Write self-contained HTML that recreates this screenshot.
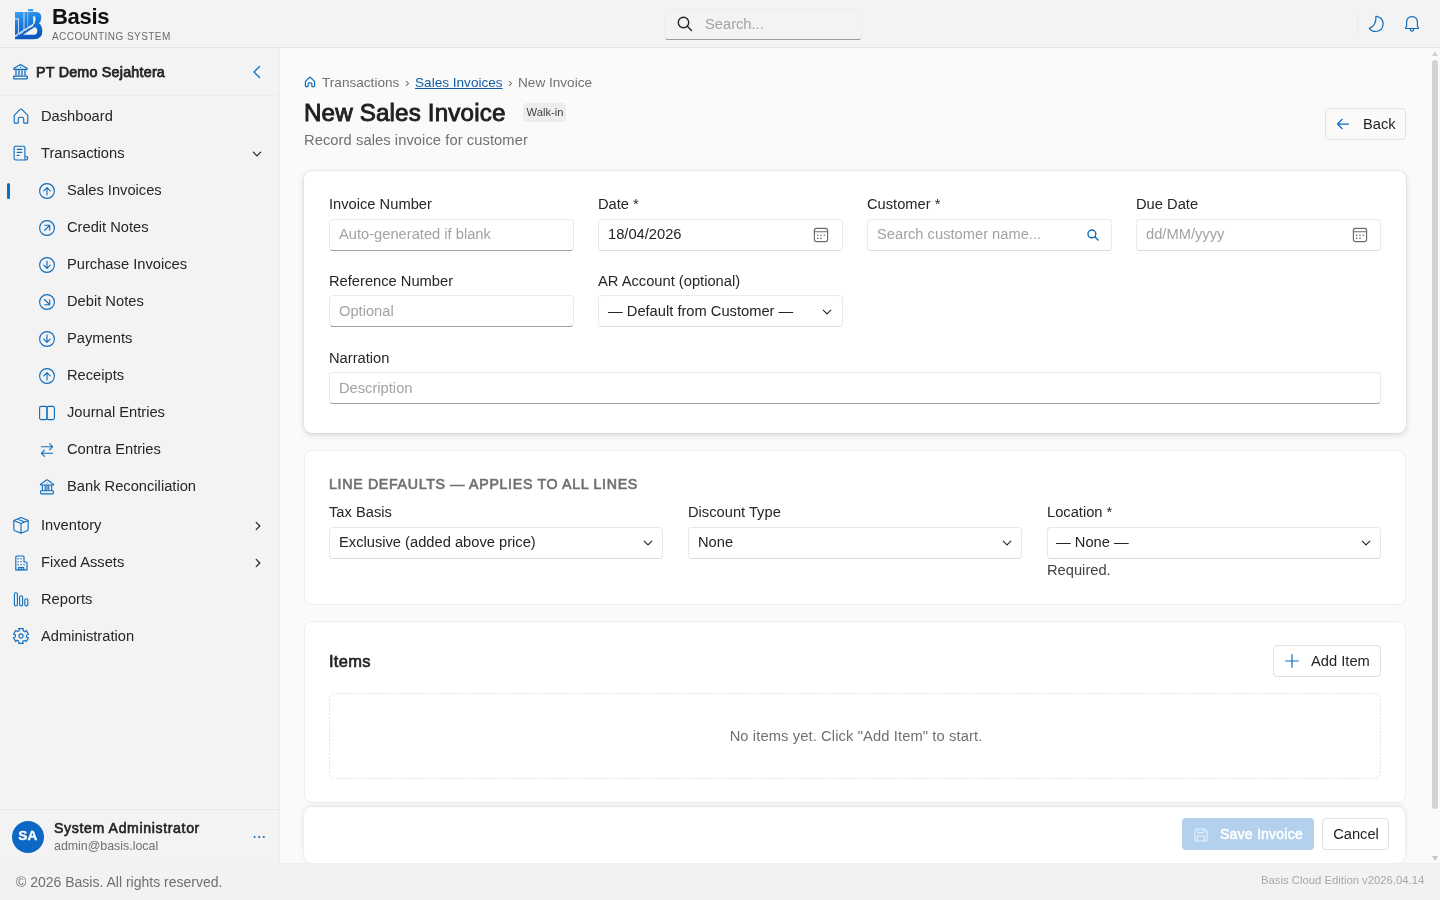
<!DOCTYPE html>
<html><head><meta charset="utf-8"><title>New Sales Invoice - Basis</title>
<style>
html,body{margin:0;padding:0;width:1440px;height:900px;overflow:hidden;}
body{position:relative;background:#fafafa;font-family:"Liberation Sans", sans-serif;}
.t{position:absolute;line-height:1;white-space:nowrap;will-change:transform;}
svg{display:block}
</style></head><body>

<div style="position:absolute;left:0px;top:0px;width:1440px;height:48px;box-sizing:border-box;background:#f3f3f3;border-bottom:1px solid #e3e3e3;"></div>
<div style="position:absolute;left:0px;top:48px;width:280px;height:815px;box-sizing:border-box;background:#f3f3f3;border-right:1px solid #ededed;"></div>
<div style="position:absolute;left:0px;top:863px;width:1440px;height:37px;box-sizing:border-box;background:#f2f2f2;border-top:1px solid #efefef;"></div>
<svg style="position:absolute;left:12px;top:6px;" width="32" height="36" viewBox="0 0 32 36" fill="none">
<defs><linearGradient id="lg" x1="0" y1="0" x2="0.25" y2="1"><stop offset="0" stop-color="#45aaf2"/><stop offset="0.5" stop-color="#1a7ee0"/><stop offset="1" stop-color="#0b57bf"/></linearGradient></defs>
<path fill="url(#lg)" fill-rule="evenodd" d="M3 6 H11.6 V26 L6.8 29 V12.5 H3 Z M3 13.5 H6 V29.6 L3 31.3 Z M12.4 6 H15.6 V23.2 L12.4 25.2 Z M16.1 6 H21.2 V20 L16.1 23 Z M16.1 3 H21.2 V5.3 H16.1 Z M21.2 6 H24.5 Q29.3 6.3 29.3 11.5 Q29.3 15 27 17.3 Q30.3 19.5 30.3 25.5 Q30.2 33.2 22 33.2 H3 V30.5 L21 18.5 Q23.6 16.6 23.6 12.8 Q23.4 10 21.2 10 Z M11 28.8 H21.8 Q25.3 28.6 25.3 25 Q25.2 21.2 22.5 21.2 Z"/>
<path d="M2.5 30 L23 17" stroke="#f3f3f3" stroke-width="0.9"/>
</svg>
<div class="t" style="top:6.38px;font-size:22px;color:#111;font-weight:700;letter-spacing:-0.3px;left:52px;">Basis</div>
<div class="t" style="top:31.54px;font-size:10px;color:#6b6b6b;font-weight:400;letter-spacing:0.45px;left:52px;">ACCOUNTING SYSTEM</div>
<div style="position:absolute;left:664px;top:8px;width:198px;height:32px;box-sizing:border-box;border:1px solid #eeeeee;border-bottom:1px solid #9a9a9a;border-radius:4px;"></div>
<svg style="position:absolute;left:677px;top:16px;" width="16" height="16" viewBox="0 0 16 16" fill="none"><circle cx="6.5" cy="6.5" r="5.2" stroke="#242424" stroke-width="1.4"/><path d="M10.3 10.3 L14.5 14.5" stroke="#242424" stroke-width="1.4" stroke-linecap="round"/></svg>
<div class="t" style="top:16.76px;font-size:14.7px;color:#a3a3a3;font-weight:400;left:705px;">Search...</div>
<div style="position:absolute;left:1357px;top:12px;width:1px;height:23px;box-sizing:border-box;background:#ebebeb;"></div>
<svg style="position:absolute;left:1364px;top:12px;" width="24" height="24" viewBox="1364 12 24 24" fill="none"><path d="M1375.9 16.5 C1376.3 22.5 1374.2 26.5 1369.3 28.4 Q1371.3 31.5 1375.8 31.5 Q1383 31.2 1383.1 23.6 Q1382.8 17.4 1376.6 16.4 Z" stroke="#0f6cbd" stroke-width="1.15" stroke-linejoin="round"/></svg>
<svg style="position:absolute;left:1404px;top:15px;" width="17" height="18" viewBox="0 0 17 18" fill="none"><path d="M2.6 11.6 V7.6 Q2.6 1.6 8 1.6 Q13.4 1.6 13.4 7.6 V11.6 L14.5 12.7 Q14.8 13.5 14 13.5 H2 Q1.2 13.5 1.5 12.7 Z" stroke="#0f6cbd" stroke-width="1.15" stroke-linejoin="round"/><path d="M6.3 13.8 Q6.3 16.2 8 16.2 Q9.7 16.2 9.7 13.8" stroke="#0f6cbd" stroke-width="1.15"/></svg>
<svg style="position:absolute;left:12px;top:63px;" width="17" height="17" viewBox="0 0 17 17" fill="none"><path d="M2 5.3 L8.5 1.5 L15 5.3 V6.5 H2 Z" stroke="#0f6cbd" stroke-width="1.3" stroke-linejoin="round"/><circle cx="8.5" cy="4.2" r="0.7" fill="#0f6cbd"/><path d="M4 7.5 V12.5 M7 7.5 V12.5 M10 7.5 V12.5 M13 7.5 V12.5" stroke="#0f6cbd" stroke-width="1.3"/><rect x="1.7" y="13.2" width="13.6" height="2.6" rx="0.6" stroke="#0f6cbd" stroke-width="1.3"/></svg>
<div class="t" style="top:65.20px;font-size:14.3px;color:#242424;font-weight:400;letter-spacing:0.22px;left:36px;-webkit-text-stroke:0.75px #242424;">PT Demo Sejahtera</div>
<svg style="position:absolute;left:251px;top:65px;" width="12" height="14" viewBox="0 0 12 14" fill="none"><path d="M8.5 1.5 L3 7 L8.5 12.5" stroke="#0f6cbd" stroke-width="1.3" stroke-linecap="round" stroke-linejoin="round"/></svg>
<div style="position:absolute;left:0px;top:95px;width:280px;height:1px;box-sizing:border-box;background:#ededed;"></div>
<svg style="position:absolute;left:8.7px;top:104.0px" width="24" height="24" viewBox="-12.0 -12.0 24 24" fill="none" stroke="#0f6cbd" stroke-width="1.12" stroke-linecap="round" stroke-linejoin="round"><path d="M-6.3 -1.2 L-0.9 -6.6 Q0 -7.4 0.9 -6.6 L6.3 -1.2 Q6.8 -0.7 6.8 0 V6.4 Q6.8 7.1 6.1 7.1 H3.4 Q2.7 7.1 2.7 6.4 V2.6 Q2.7 1.2 1.3 1.2 H-1.3 Q-2.7 1.2 -2.7 2.6 V6.4 Q-2.7 7.1 -3.4 7.1 H-6.1 Q-6.8 7.1 -6.8 6.4 V0 Q-6.8 -0.7 -6.3 -1.2 Z"/></svg>
<div class="t" style="top:108.56px;font-size:14.7px;color:#262626;font-weight:400;left:41px;">Dashboard</div>
<svg style="position:absolute;left:8.7px;top:141.0px" width="24" height="24" viewBox="-12.0 -12.0 24 24" fill="none" stroke="#0f6cbd" stroke-width="1.12" stroke-linecap="round" stroke-linejoin="round"><path d="M-5.1 7 Q-6.9 7 -6.9 5.2 V-5.2 Q-6.9 -6.8 -5.3 -6.8 H2.3 Q3.9 -6.8 3.9 -5.2 V3.8 H6.6 V5.2 Q6.6 7 4.8 7 Z M3.9 3.8 V5.2 Q3.9 7 5.3 7"/><path d="M-3.8 -3.6 H0.8 M-3.8 -0.6 H0.8 M-3.8 2.4 H-2"/></svg>
<div class="t" style="top:145.56px;font-size:14.7px;color:#262626;font-weight:400;left:41px;">Transactions</div>
<svg style="position:absolute;left:249px;top:146px" width="16" height="16" viewBox="-8 -8 16 16" fill="none" stroke="#242424" stroke-width="1.2" stroke-linecap="round" stroke-linejoin="round"><path d="M-3.6 -1.8 L0 1.8 L3.6 -1.8"/></svg>
<svg style="position:absolute;left:34.7px;top:178.5px" width="24" height="24" viewBox="-12.0 -12.0 24 24" fill="none" stroke="#0f6cbd" stroke-width="1.12" stroke-linecap="round" stroke-linejoin="round"><circle cx="0" cy="0" r="7.4"/><path d="M0 3.9 V-3.3 M-3.2 -0.1 L0 -3.3 L3.2 -0.1"/></svg>
<div class="t" style="top:182.56px;font-size:14.7px;color:#262626;font-weight:400;left:67px;">Sales Invoices</div>
<svg style="position:absolute;left:34.7px;top:215.5px" width="24" height="24" viewBox="-12.0 -12.0 24 24" fill="none" stroke="#0f6cbd" stroke-width="1.12" stroke-linecap="round" stroke-linejoin="round"><circle cx="0" cy="0" r="7.4"/><path d="M-2.5 2.5 L2.5 -2.5 M-2.3 -2.7 H2.7 V2.3"/></svg>
<div class="t" style="top:219.56px;font-size:14.7px;color:#262626;font-weight:400;left:67px;">Credit Notes</div>
<svg style="position:absolute;left:34.7px;top:252.5px" width="24" height="24" viewBox="-12.0 -12.0 24 24" fill="none" stroke="#0f6cbd" stroke-width="1.12" stroke-linecap="round" stroke-linejoin="round"><circle cx="0" cy="0" r="7.4"/><path d="M0 -3.9 V3.3 M-3.2 0.1 L0 3.3 L3.2 0.1"/></svg>
<div class="t" style="top:256.56px;font-size:14.7px;color:#262626;font-weight:400;left:67px;">Purchase Invoices</div>
<svg style="position:absolute;left:34.7px;top:289.5px" width="24" height="24" viewBox="-12.0 -12.0 24 24" fill="none" stroke="#0f6cbd" stroke-width="1.12" stroke-linecap="round" stroke-linejoin="round"><circle cx="0" cy="0" r="7.4"/><path d="M-2.5 -2.5 L2.5 2.5 M2.7 -2.3 V2.7 H-2.3"/></svg>
<div class="t" style="top:293.56px;font-size:14.7px;color:#262626;font-weight:400;left:67px;">Debit Notes</div>
<svg style="position:absolute;left:34.7px;top:326.5px" width="24" height="24" viewBox="-12.0 -12.0 24 24" fill="none" stroke="#0f6cbd" stroke-width="1.12" stroke-linecap="round" stroke-linejoin="round"><circle cx="0" cy="0" r="7.4"/><path d="M0 -3.9 V3.3 M-3.2 0.1 L0 3.3 L3.2 0.1"/></svg>
<div class="t" style="top:330.56px;font-size:14.7px;color:#262626;font-weight:400;left:67px;">Payments</div>
<svg style="position:absolute;left:34.7px;top:363.5px" width="24" height="24" viewBox="-12.0 -12.0 24 24" fill="none" stroke="#0f6cbd" stroke-width="1.12" stroke-linecap="round" stroke-linejoin="round"><circle cx="0" cy="0" r="7.4"/><path d="M0 3.9 V-3.3 M-3.2 -0.1 L0 -3.3 L3.2 -0.1"/></svg>
<div class="t" style="top:367.56px;font-size:14.7px;color:#262626;font-weight:400;left:67px;">Receipts</div>
<svg style="position:absolute;left:34.7px;top:400.5px" width="24" height="24" viewBox="-12.0 -12.0 24 24" fill="none" stroke="#0f6cbd" stroke-width="1.12" stroke-linecap="round" stroke-linejoin="round"><rect x="-7.4" y="-6.6" width="7.4" height="13.2" rx="1.6"/><rect x="0" y="-6.6" width="7.4" height="13.2" rx="1.6"/></svg>
<div class="t" style="top:404.56px;font-size:14.7px;color:#262626;font-weight:400;left:67px;">Journal Entries</div>
<svg style="position:absolute;left:34.7px;top:437.5px" width="24" height="24" viewBox="-12.0 -12.0 24 24" fill="none" stroke="#0f6cbd" stroke-width="1.12" stroke-linecap="round" stroke-linejoin="round"><path d="M-5.6 -3.3 H5.6 M2.5 -6.4 L5.6 -3.3 L2.5 -0.2 M5.6 3.3 H-5.6 M-2.5 0.2 L-5.6 3.3 L-2.5 6.4"/></svg>
<div class="t" style="top:441.56px;font-size:14.7px;color:#262626;font-weight:400;left:67px;">Contra Entries</div>
<svg style="position:absolute;left:34.7px;top:474.5px" width="24" height="24" viewBox="-12.0 -12.0 24 24" fill="none" stroke="#0f6cbd" stroke-width="1.12" stroke-linecap="round" stroke-linejoin="round"><path d="M-6.4 -2.6 L-0.6 -7 Q0 -7.4 0.6 -7 L6.4 -2.6 Q6.8 -2.2 6.4 -2 H-6.4 Q-6.8 -2.2 -6.4 -2.6 Z"/><path d="M-4.6 -1.6 V3.4 M-1.8 -1.6 V3.4 M0 -1.6 V3.4 M1.8 -1.6 V3.4 M4.6 -1.6 V3.4"/><rect x="-6.4" y="3.8" width="12.8" height="3.1" rx="0.8"/><circle cx="0" cy="-4.3" r="0.55" fill="#0f6cbd" stroke="none"/></svg>
<div class="t" style="top:478.56px;font-size:14.7px;color:#262626;font-weight:400;left:67px;">Bank Reconciliation</div>
<div style="position:absolute;left:7px;top:183px;width:3px;height:16px;box-sizing:border-box;background:#0f6cbd;border-radius:2px;"></div>
<svg style="position:absolute;left:8.7px;top:513.0px" width="24" height="24" viewBox="-12.0 -12.0 24 24" fill="none" stroke="#0f6cbd" stroke-width="1.12" stroke-linecap="round" stroke-linejoin="round"><path d="M0 -7.4 L7.2 -4.4 V4.6 Q7.2 5.2 6.6 5.5 L0 8.2 L-6.6 5.5 Q-7.2 5.2 -7.2 4.6 V-4.4 Z M-7.2 -4.4 L0 -1.5 L7.2 -4.4 M0 -1.5 V8.2 M-3.6 -5.9 L3.6 -3"/></svg>
<div class="t" style="top:517.56px;font-size:14.7px;color:#262626;font-weight:400;left:41px;">Inventory</div>
<svg style="position:absolute;left:250px;top:517.5px" width="16" height="16" viewBox="-8 -8 16 16" fill="none" stroke="#242424" stroke-width="1.2" stroke-linecap="round" stroke-linejoin="round"><path d="M-1.8 -3.6 L1.8 0 L-1.8 3.6"/></svg>
<svg style="position:absolute;left:8.7px;top:550.8px" width="24" height="24" viewBox="-12.0 -12.0 24 24" fill="none" stroke="#0f6cbd" stroke-width="1.12" stroke-linecap="round" stroke-linejoin="round"><path d="M-5.2 6.9 V-6 Q-5.2 -7 -4.2 -7 H2 Q3 -7 3 -6 V-1 H5 Q6 -1 6 0 V6.9 Z"/><path d="M-2.5 6.9 V4.6 H2.7 V6.9 M0.1 4.6 V6.9" stroke-width="1.1"/><g fill="#0f6cbd" stroke="none"><circle cx="-2.9" cy="-4.2" r="0.75"/><circle cx="0" cy="-4.2" r="0.75"/><circle cx="-2.9" cy="-1.2" r="0.75"/><circle cx="0" cy="-1.2" r="0.75"/><circle cx="-2.9" cy="1.8" r="0.75"/><circle cx="0" cy="1.8" r="0.75"/><circle cx="3" cy="1.8" r="0.75"/></g></svg>
<div class="t" style="top:554.56px;font-size:14.7px;color:#262626;font-weight:400;left:41px;">Fixed Assets</div>
<svg style="position:absolute;left:250px;top:555.3px" width="16" height="16" viewBox="-8 -8 16 16" fill="none" stroke="#242424" stroke-width="1.2" stroke-linecap="round" stroke-linejoin="round"><path d="M-1.8 -3.6 L1.8 0 L-1.8 3.6"/></svg>
<svg style="position:absolute;left:8.7px;top:587.0px" width="24" height="24" viewBox="-12.0 -12.0 24 24" fill="none" stroke="#0f6cbd" stroke-width="1.12" stroke-linecap="round" stroke-linejoin="round"><rect x="-6.6" y="-6.3" width="3" height="13.2" rx="1.5"/><rect x="-1.4" y="-3.2" width="3" height="10.1" rx="1.5"/><rect x="3.8" y="-0.2" width="3" height="7.1" rx="1.5"/></svg>
<div class="t" style="top:591.56px;font-size:14.7px;color:#262626;font-weight:400;left:41px;">Reports</div>
<svg style="position:absolute;left:8.7px;top:624.3px" width="24" height="24" viewBox="-12.0 -12.0 24 24" fill="none" stroke="#0f6cbd" stroke-width="1.12" stroke-linecap="round" stroke-linejoin="round"><path d="M-2.25 -7.36 L2.25 -7.36 L2.14 -5.28 L3.39 -4.33 L3.89 -4.17 L5.25 -5.63 L7.50 -1.73 L5.64 -0.79 L5.45 0.77 L5.55 1.28 L7.50 1.73 L5.25 5.63 L3.51 4.49 L2.06 5.10 L1.67 5.45 L2.25 7.36 L-2.25 7.36 L-2.14 5.28 L-3.39 4.33 L-3.89 4.17 L-5.25 5.63 L-7.50 1.73 L-5.64 0.79 L-5.45 -0.77 L-5.55 -1.28 L-7.50 -1.73 L-5.25 -5.63 L-3.51 -4.49 L-2.06 -5.10 L-1.67 -5.45 Z"/><circle cx="0" cy="0" r="2.1"/></svg>
<div class="t" style="top:628.56px;font-size:14.7px;color:#262626;font-weight:400;left:41px;">Administration</div>
<div style="position:absolute;left:0px;top:809px;width:280px;height:1px;box-sizing:border-box;background:#e9e9e9;"></div>
<div style="position:absolute;left:12px;top:820.6px;width:32px;height:32px;box-sizing:border-box;background:#0c68c4;border-radius:50%;"></div>
<div class="t" style="top:829.49px;font-size:13.6px;color:#fff;font-weight:700;letter-spacing:0.2px;left:-272px;width:600px;text-align:center;-webkit-text-stroke:0.35px #fff;">SA</div>
<div class="t" style="top:821.06px;font-size:14.1px;color:#242424;font-weight:400;letter-spacing:0.64px;left:54px;-webkit-text-stroke:0.6px #242424;">System Administrator</div>
<div class="t" style="top:839.50px;font-size:12.4px;color:#707070;font-weight:400;left:54px;">admin@basis.local</div>
<svg style="position:absolute;left:250px;top:832px;" width="18" height="10" viewBox="0 0 18 10" fill="none"><circle cx="4.6" cy="5" r="1.05" fill="#0f6cbd"/><circle cx="9.2" cy="5" r="1.05" fill="#0f6cbd"/><circle cx="13.8" cy="5" r="1.05" fill="#0f6cbd"/></svg>
<div class="t" style="top:875.15px;font-size:14px;color:#707070;font-weight:400;left:16px;">© 2026 Basis. All rights reserved.</div>
<div class="t" style="top:875.43px;font-size:11.3px;color:#a8a8a8;font-weight:400;right:16px;text-align:right;">Basis Cloud Edition v2026.04.14</div>
<svg style="position:absolute;left:298.0px;top:70.0px" width="24" height="24" viewBox="-12.0 -12.0 24 24" fill="none" stroke="#0f6cbd" stroke-width="1.2" stroke-linecap="round" stroke-linejoin="round"><path d="M-4.2 -0.9 L-0.6 -4.5 Q0 -5 0.6 -4.5 L4.2 -0.9 Q4.6 -0.5 4.6 0 V4.1 Q4.6 4.6 4.1 4.6 H2.3 Q1.8 4.6 1.8 4.1 V1.8 Q1.8 0.9 0.9 0.9 H-0.9 Q-1.8 0.9 -1.8 1.8 V4.1 Q-1.8 4.6 -2.3 4.6 H-4.1 Q-4.6 4.6 -4.6 4.1 V0 Q-4.6 -0.5 -4.2 -0.9 Z"/></svg>
<div class="t" style="top:75.79px;font-size:13.6px;color:#707070;font-weight:400;left:322px;">Transactions</div>
<div class="t" style="top:75.79px;font-size:13.6px;color:#707070;font-weight:400;left:404.5px;">›</div>
<div class="t" style="top:75.79px;font-size:13.6px;color:#115ea3;font-weight:400;left:415px;text-decoration:underline;text-decoration-thickness:1px;text-underline-offset:1px;">Sales Invoices</div>
<div class="t" style="top:75.79px;font-size:13.6px;color:#707070;font-weight:400;left:507.5px;">›</div>
<div class="t" style="top:75.79px;font-size:13.6px;color:#707070;font-weight:400;left:518px;">New Invoice</div>
<div class="t" style="top:100.71px;font-size:24.2px;color:#1f1f1f;font-weight:400;letter-spacing:0.15px;left:304px;-webkit-text-stroke:0.9px #1f1f1f;">New Sales Invoice</div>
<div style="position:absolute;left:523px;top:103px;width:43px;height:19px;box-sizing:border-box;background:#ededed;border-radius:4px;"></div>
<div class="t" style="top:106.92px;font-size:11.2px;color:#424242;font-weight:400;left:244.5px;width:600px;text-align:center;">Walk-in</div>
<div class="t" style="top:132.76px;font-size:14.7px;color:#707070;font-weight:400;letter-spacing:0.08px;left:304px;">Record sales invoice for customer</div>
<div style="position:absolute;left:1325px;top:108px;width:81px;height:32px;box-sizing:border-box;border:1px solid #e0e0e0;border-radius:4px;background:#fafafa;"></div>
<svg style="position:absolute;left:1331.3px;top:112.0px" width="24" height="24" viewBox="-12.0 -12.0 24 24" fill="none" stroke="#0f6cbd" stroke-width="1.25" stroke-linecap="round" stroke-linejoin="round"><path d="M5.5 0 H-5.5 M-0.8 -4.7 L-5.5 0 L-0.8 4.7"/></svg>
<div class="t" style="top:116.76px;font-size:14.7px;color:#242424;font-weight:400;left:1363px;">Back</div>
<div style="position:absolute;left:304px;top:171px;width:1102px;height:262px;box-sizing:border-box;background:#fff;border-radius:8px;box-shadow:0 0 2px rgba(0,0,0,0.12),0 2px 6px rgba(0,0,0,0.14);"></div>
<div class="t" style="top:196.56px;font-size:14.7px;color:#262626;font-weight:400;left:329px;">Invoice Number</div>
<div style="position:absolute;left:329px;top:219px;width:245px;height:32px;box-sizing:border-box;background:#fff;border:1px solid #ebebeb;border-bottom-color:#a0a0a0;border-radius:4px;"></div>
<div class="t" style="top:226.56px;font-size:14.7px;color:#a3a3a3;font-weight:400;left:339px;">Auto-generated if blank</div>
<div class="t" style="top:196.56px;font-size:14.7px;color:#262626;font-weight:400;left:598px;">Date *</div>
<div style="position:absolute;left:598px;top:219px;width:245px;height:32px;box-sizing:border-box;background:#fff;border:1px solid #ebebeb;border-bottom-color:#dcdcdc;border-radius:4px;"></div>
<div class="t" style="top:226.56px;font-size:14.7px;color:#242424;font-weight:400;left:607.5px;">18/04/2026</div>
<svg style="position:absolute;left:809.2px;top:222.6px" width="24" height="24" viewBox="-12.0 -12.0 24 24" fill="none" stroke="#6b6b6b" stroke-width="1.15" stroke-linecap="round" stroke-linejoin="round"><rect x="-6.6" y="-6.6" width="13.2" height="13.2" rx="2.2"/><path d="M-6.6 -3.3 H6.6"/><g fill="#6b6b6b" stroke="none"><circle cx="-3.3" cy="0.3" r="0.8"/><circle cx="0" cy="0.3" r="0.8"/><circle cx="3.3" cy="0.3" r="0.8"/><circle cx="-3.3" cy="3.4" r="0.8"/><circle cx="0" cy="3.4" r="0.8"/></g></svg>
<div class="t" style="top:196.56px;font-size:14.7px;color:#262626;font-weight:400;left:867px;">Customer *</div>
<div style="position:absolute;left:867px;top:219px;width:245px;height:32px;box-sizing:border-box;background:#fff;border:1px solid #ebebeb;border-bottom-color:#dcdcdc;border-radius:4px;"></div>
<div class="t" style="top:226.56px;font-size:14.7px;color:#a3a3a3;font-weight:400;left:877px;">Search customer name...</div>
<svg style="position:absolute;left:1080.5px;top:223.0px" width="24" height="24" viewBox="-12.0 -12.0 24 24" fill="none" stroke="#0f6cbd" stroke-width="1.45" stroke-linecap="round" stroke-linejoin="round"><circle cx="-1.1" cy="-1.1" r="3.9"/><path d="M1.8 1.8 L5 5"/></svg>
<div class="t" style="top:196.56px;font-size:14.7px;color:#262626;font-weight:400;left:1136px;">Due Date</div>
<div style="position:absolute;left:1136px;top:219px;width:245px;height:32px;box-sizing:border-box;background:#fff;border:1px solid #ebebeb;border-bottom-color:#dcdcdc;border-radius:4px;"></div>
<div class="t" style="top:226.56px;font-size:14.7px;color:#a3a3a3;font-weight:400;left:1146px;">dd/MM/yyyy</div>
<svg style="position:absolute;left:1348.2px;top:222.6px" width="24" height="24" viewBox="-12.0 -12.0 24 24" fill="none" stroke="#6b6b6b" stroke-width="1.15" stroke-linecap="round" stroke-linejoin="round"><rect x="-6.6" y="-6.6" width="13.2" height="13.2" rx="2.2"/><path d="M-6.6 -3.3 H6.6"/><g fill="#6b6b6b" stroke="none"><circle cx="-3.3" cy="0.3" r="0.8"/><circle cx="0" cy="0.3" r="0.8"/><circle cx="3.3" cy="0.3" r="0.8"/><circle cx="-3.3" cy="3.4" r="0.8"/><circle cx="0" cy="3.4" r="0.8"/></g></svg>
<div class="t" style="top:273.56px;font-size:14.7px;color:#262626;font-weight:400;left:329px;">Reference Number</div>
<div style="position:absolute;left:329px;top:295px;width:245px;height:32px;box-sizing:border-box;background:#fff;border:1px solid #ebebeb;border-bottom-color:#a0a0a0;border-radius:4px;"></div>
<div class="t" style="top:303.56px;font-size:14.7px;color:#a3a3a3;font-weight:400;left:339px;">Optional</div>
<div class="t" style="top:273.56px;font-size:14.7px;color:#262626;font-weight:400;left:598px;">AR Account (optional)</div>
<div style="position:absolute;left:598px;top:295px;width:245px;height:32px;box-sizing:border-box;background:#fff;border:1px solid #ebebeb;border-bottom-color:#dcdcdc;border-radius:4px;"></div>
<div class="t" style="top:303.56px;font-size:14.7px;color:#242424;font-weight:400;left:607.5px;">— Default from Customer —</div>
<svg style="position:absolute;left:819px;top:303.5px" width="16" height="16" viewBox="-8 -8 16 16" fill="none" stroke="#242424" stroke-width="1.1" stroke-linecap="round" stroke-linejoin="round"><path d="M-3.8 -1.9 L0 1.9 L3.8 -1.9"/></svg>
<div class="t" style="top:350.56px;font-size:14.7px;color:#262626;font-weight:400;left:329px;">Narration</div>
<div style="position:absolute;left:329px;top:372px;width:1052px;height:32px;box-sizing:border-box;background:#fff;border:1px solid #ebebeb;border-bottom-color:#a0a0a0;border-radius:4px;"></div>
<div class="t" style="top:380.56px;font-size:14.7px;color:#a3a3a3;font-weight:400;left:339px;">Description</div>
<div style="position:absolute;left:304px;top:450px;width:1102px;height:155px;box-sizing:border-box;background:#fff;border:1px solid #eeeeee;border-radius:8px;"></div>
<div class="t" style="top:476.78px;font-size:14.2px;color:#707070;font-weight:400;letter-spacing:0.69px;left:329px;-webkit-text-stroke:0.65px #707070;">LINE DEFAULTS — APPLIES TO ALL LINES</div>
<div class="t" style="top:504.56px;font-size:14.7px;color:#262626;font-weight:400;left:329px;">Tax Basis</div>
<div style="position:absolute;left:329px;top:527px;width:334px;height:32px;box-sizing:border-box;background:#fff;border:1px solid #e8e8e8;border-bottom-color:#dadada;border-radius:4px;"></div>
<div class="t" style="top:534.56px;font-size:14.7px;color:#242424;font-weight:400;left:339px;">Exclusive (added above price)</div>
<svg style="position:absolute;left:639.5px;top:534.5px" width="16" height="16" viewBox="-8 -8 16 16" fill="none" stroke="#242424" stroke-width="1.1" stroke-linecap="round" stroke-linejoin="round"><path d="M-3.8 -1.9 L0 1.9 L3.8 -1.9"/></svg>
<div class="t" style="top:504.56px;font-size:14.7px;color:#262626;font-weight:400;left:688px;">Discount Type</div>
<div style="position:absolute;left:688px;top:527px;width:334px;height:32px;box-sizing:border-box;background:#fff;border:1px solid #e8e8e8;border-bottom-color:#dadada;border-radius:4px;"></div>
<div class="t" style="top:534.56px;font-size:14.7px;color:#242424;font-weight:400;left:698px;">None</div>
<svg style="position:absolute;left:998.5px;top:534.5px" width="16" height="16" viewBox="-8 -8 16 16" fill="none" stroke="#242424" stroke-width="1.1" stroke-linecap="round" stroke-linejoin="round"><path d="M-3.8 -1.9 L0 1.9 L3.8 -1.9"/></svg>
<div class="t" style="top:504.56px;font-size:14.7px;color:#262626;font-weight:400;left:1047px;">Location *</div>
<div style="position:absolute;left:1047px;top:527px;width:334px;height:32px;box-sizing:border-box;background:#fff;border:1px solid #e8e8e8;border-bottom-color:#dadada;border-radius:4px;"></div>
<div class="t" style="top:534.56px;font-size:14.7px;color:#242424;font-weight:400;left:1056px;">— None —</div>
<svg style="position:absolute;left:1357.5px;top:534.5px" width="16" height="16" viewBox="-8 -8 16 16" fill="none" stroke="#242424" stroke-width="1.1" stroke-linecap="round" stroke-linejoin="round"><path d="M-3.8 -1.9 L0 1.9 L3.8 -1.9"/></svg>
<div class="t" style="top:562.56px;font-size:14.7px;color:#424242;font-weight:400;left:1047px;">Required.</div>
<div style="position:absolute;left:304px;top:621px;width:1102px;height:182px;box-sizing:border-box;background:#fff;border:1px solid #eeeeee;border-radius:8px;"></div>
<div class="t" style="top:652.73px;font-size:16.5px;color:#242424;font-weight:400;letter-spacing:0.28px;left:329px;-webkit-text-stroke:0.65px #242424;">Items</div>
<div style="position:absolute;left:1273px;top:645px;width:108px;height:32px;box-sizing:border-box;background:#fff;border:1px solid #e0e0e0;border-radius:4px;"></div>
<svg style="position:absolute;left:1279.5px;top:649.0px" width="24" height="24" viewBox="-12.0 -12.0 24 24" fill="none" stroke="#0f6cbd" stroke-width="1.2" stroke-linecap="round" stroke-linejoin="round"><path d="M0 -6.3 V6.3 M-6.3 0 H6.3"/></svg>
<div class="t" style="top:653.56px;font-size:14.7px;color:#242424;font-weight:400;left:1311px;">Add Item</div>
<svg style="position:absolute;left:329px;top:693px;" width="1052" height="86" viewBox="0 0 1052 86" fill="none"><rect x="0.5" y="0.5" width="1051" height="85" rx="6" stroke="#e2e2e2" stroke-width="1" stroke-dasharray="2 1.6"/></svg>
<div class="t" style="top:728.56px;font-size:14.7px;color:#707070;font-weight:400;letter-spacing:0.12px;left:555.5px;width:600px;text-align:center;">No items yet. Click "Add Item" to start.</div>
<div style="position:absolute;left:280px;top:780px;width:1160px;height:83px;overflow:hidden;"><div style="position:absolute;left:24px;top:27px;width:1101px;height:56px;background:#fff;border-radius:8px;box-shadow:0 0 3px rgba(0,0,0,0.08),0 -2px 6px rgba(0,0,0,0.07);"></div></div>
<div style="position:absolute;left:1182px;top:818px;width:132px;height:32px;box-sizing:border-box;background:#b3d0ec;border-radius:4px;"></div>
<svg style="position:absolute;left:1188.8px;top:822.8px" width="24" height="24" viewBox="-12.0 -12.0 24 24" fill="none" stroke="#eaf2fb" stroke-width="1.05" stroke-linecap="round" stroke-linejoin="round"><path d="M-5.2 -6 H3.3 L6 -3.3 V4.8 Q6 6 4.8 6 H-4.8 Q-6 6 -6 4.8 V-4.8 Q-6 -6 -5.2 -6 Z M-3 -6 V-3 Q-3 -2.3 -2.3 -2.3 H1.8 Q2.5 -2.3 2.5 -3 V-6 M-3.6 6 V1.6 Q-3.6 0.9 -2.9 0.9 H2.9 Q3.6 0.9 3.6 1.6 V6"/></svg>
<div class="t" style="top:827.35px;font-size:14px;color:#fff;font-weight:400;letter-spacing:0.23px;left:1220px;-webkit-text-stroke:0.55px #fff;">Save Invoice</div>
<div style="position:absolute;left:1322px;top:818px;width:67px;height:32px;box-sizing:border-box;background:#fff;border:1px solid #e0e0e0;border-radius:4px;"></div>
<div class="t" style="top:826.76px;font-size:14.7px;color:#242424;font-weight:400;left:1055.5px;width:600px;text-align:center;">Cancel</div>
<div style="position:absolute;left:1432px;top:60px;width:6px;height:749px;box-sizing:border-box;background:#d3d3d3;border-radius:3px;"></div>
<div style="position:absolute;left:1432px;top:51px;width:0;height:0;border-left:3px solid transparent;border-right:3px solid transparent;border-bottom:5px solid #d3d3d3;"></div>
<div style="position:absolute;left:1432px;top:856px;width:0;height:0;border-left:3px solid transparent;border-right:3px solid transparent;border-top:5px solid #c8c8c8;"></div>
</body></html>
